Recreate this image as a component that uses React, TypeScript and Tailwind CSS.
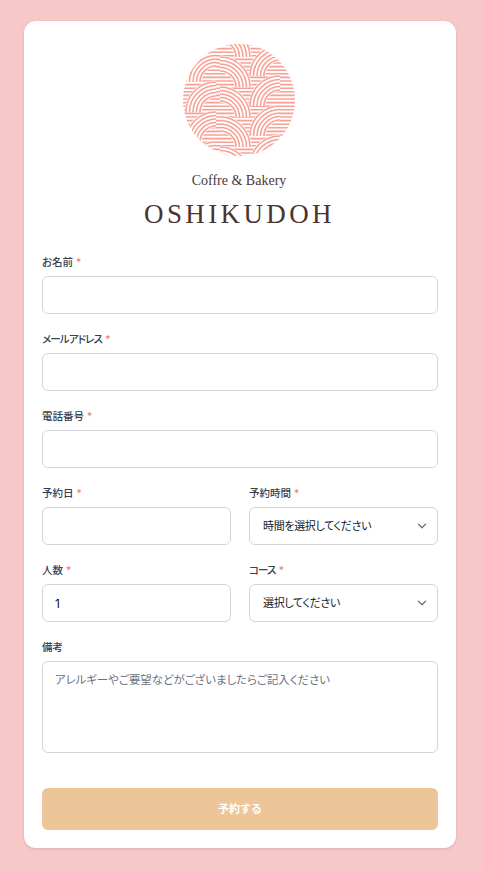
import { ChevronDown } from 'lucide-react';

const LINE = '#f8a093';
const RADII = [16, 19.5, 23, 26.5, 30];

// quarter fan of the logo pattern, dir 1 bends to the right, -1 to the left
function Fan({ cx, cy, dir }: { cx: number; cy: number; dir: 1 | -1 }) {
  const sweep = dir === 1 ? 1 : 0;
  return (
    <g>
      <path
        d={`M${cx} ${cy - 31.5}A31.5 31.5 0 0 ${sweep} ${cx + dir * 31.5} ${cy}L${cx + dir * 14.5} ${cy}A14.5 14.5 0 0 ${1 - sweep} ${cx} ${cy - 14.5}Z`}
        fill="#fff"
      />
      {RADII.map((r) => (
        <path key={r} d={`M${cx} ${cy - r}A${r} ${r} 0 0 ${sweep} ${cx + dir * r} ${cy}`} fill="none" stroke={LINE} strokeWidth="1.6" />
      ))}
    </g>
  );
}

function Logo() {
  const stripes = Array.from({ length: 32 }, (_, i) => 1 + i * 3.6);
  const rows = [-17, 13, 43, 73, 103, 133];
  return (
    <svg width="112" height="112" viewBox="0 0 112 112" className="block mr-[2px]">
      <defs>
        <clipPath id="logo-circle">
          <circle cx="56" cy="56" r="56" />
        </clipPath>
      </defs>
      <g clipPath="url(#logo-circle)">
        {stripes.map((y) => (
          <line key={y} x1="0" x2="112" y1={y} y2={y} stroke={LINE} strokeWidth="1.6" />
        ))}
        {rows.map((y) => (
          <g key={y}>
            <Fan cx={33} cy={y + 25} dir={-1} />
            <Fan cx={97} cy={y + 19} dir={-1} />
            <Fan cx={37} cy={y} dir={1} />
          </g>
        ))}
      </g>
    </svg>
  );
}

function Label({ text, required, tight }: { text: string; required?: boolean; tight?: boolean }) {
  return (
    <label className={`block h-[14px] mb-[7px] text-[10.5px] leading-[16px] text-[#374151] font-medium [font-feature-settings:'palt'] ${tight ? 'tracking-[-0.08em]' : ''}`}>
      {text}
      {required && <span className="ml-[3px] text-[#f87171] font-normal">*</span>}
    </label>
  );
}

const boxCls = 'block w-full h-[38px] bg-white border border-[#d1d5db] rounded-[6px]';

function Field({ label, required = true, value, tight }: { label: string; required?: boolean; value?: string; tight?: boolean }) {
  return (
    <div>
      <Label text={label} required={required} tight={tight} />
      <input readOnly value={value ?? ''} className={`${boxCls} px-3 text-[12px] text-[#111827] outline-none`} />
    </div>
  );
}

function SelectField({ label, value, tight }: { label: string; value: string; tight?: boolean }) {
  return (
    <div>
      <Label text={label} required tight={tight} />
      <div className={`${boxCls} flex items-center justify-between pl-[13px] pr-[8px]`}>
        <span className="text-[11px] tracking-[-0.03em] text-[#111827] [font-feature-settings:'palt']">{value}</span>
        <ChevronDown className="w-[14px] h-[14px] text-[#6b7280]" strokeWidth={2.2} />
      </div>
    </div>
  );
}

export default function App() {
  return (
    <div className="min-h-[871px] bg-[#f7c8c8] pl-6 pr-[26px] pt-[21px] font-['Inter','Noto_Sans_CJK_JP',sans-serif]">
      <div className="bg-white rounded-[12px] shadow-[0_1px_3px_rgba(0,0,0,0.12)] px-[18px] pt-[23px] pb-[18px] h-[827px]">
        <div className="flex flex-col items-center">
          <Logo />
          <div className="mt-[15px] font-['Liberation_Serif',serif] text-[14px] leading-[20px] text-[#4a3a38] mr-[2px]">Coffre &amp; Bakery</div>
          <div className="mt-[7px] mr-[1px] font-['Liberation_Serif',serif] text-[27px] leading-[32px] tracking-[0.125em] text-[#4a3430]">OSHIKUDOH</div>
        </div>

        <form className="mt-[25px]">
          <div className="flex flex-col gap-[18px]">
            <Field label="お名前" />
            <Field label="メールアドレス" tight />
            <Field label="電話番号" />
            <div className="grid grid-cols-2 gap-x-[18px]">
              <Field label="予約日" />
              <SelectField label="予約時間" value="時間を選択してください" />
            </div>
            <div className="grid grid-cols-2 gap-x-[18px]">
              <Field label="人数" value="1" />
              <SelectField label="コース" value="選択してください" tight />
            </div>
            <div>
              <Label text="備考" />
              <textarea
                readOnly
                placeholder="アレルギーやご要望などがございましたらご記入ください"
                className="block w-full h-[92px] resize-none bg-white border border-[#d1d5db] rounded-[6px] px-3 py-[9px] text-[11.4px] leading-[18px] outline-none placeholder:text-[#6b7280] [font-feature-settings:'palt']"
              />
            </div>
          </div>
          <button type="button" className="mt-[35px] block w-full h-[42px] rounded-[6px] bg-[#ecc699] text-white text-[11px] font-bold">
            予約する
          </button>
        </form>
      </div>
    </div>
  );
}
